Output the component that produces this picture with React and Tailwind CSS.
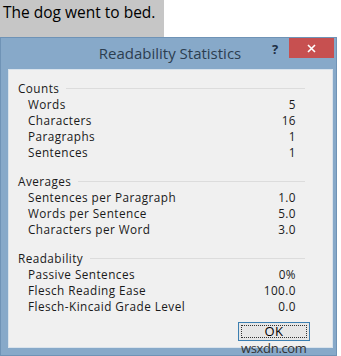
export default function App() {
  const sections = [
    {
      title: 'Counts',
      rows: [
        ['Words', '5'],
        ['Characters', '16'],
        ['Paragraphs', '1'],
        ['Sentences', '1'],
      ],
    },
    {
      title: 'Averages',
      rows: [
        ['Sentences per Paragraph', '1.0'],
        ['Words per Sentence', '5.0'],
        ['Characters per Word', '3.0'],
      ],
    },
    {
      title: 'Readability',
      rows: [
        ['Passive Sentences', '0%'],
        ['Flesch Reading Ease', '100.0'],
        ['Flesch-Kincaid Grade Level', '0.0'],
      ],
    },
  ];

  return (
    <div className="w-[341px] h-[356px] bg-white overflow-hidden relative" style={{ fontFamily: '"Open Sans", "Noto Sans", sans-serif' }}>
      <div className="h-[37px] w-[164px] bg-[#c6c6c6] pl-[3px] pt-[1px] text-[15.5px] leading-[22px] text-black">
        The dog went to bed.
      </div>

      <div className="w-[337px] h-[319px] bg-[#87a9c9] border border-[#6f93b6] flex flex-col">
        <div className="h-[31px] flex items-start relative">
          <div className="flex-1 text-center text-[15px] text-[#2c3e50] pt-[4px] pl-[3px]">Readability Statistics</div>
          <span className="absolute left-[271px] top-[2px] text-[13px] font-bold text-[#1e2f44]">?</span>
          <button className="absolute left-[288px] top-0 w-[45px] h-[20px] bg-[#c75050] flex items-center justify-center">
            <svg width="9" height="9" viewBox="0 0 9 9">
              <path d="M1 1 L8 8 M8 1 L1 8" stroke="#fff" strokeWidth="1.6" />
            </svg>
          </button>
        </div>

        <div className="ml-[7px] w-[325px] h-[279px] bg-[#f0f0f0] border border-[#d9e3ec] pt-[10px] text-[11.75px] tracking-[0.45px] text-[#1a1a1a]">
          {sections.map((s, i) => (
            <div key={s.title} className={i === 0 ? '' : 'mt-[13px]'}>
              <div className="flex items-center h-[16px] pl-[9px] pr-[27px]">
                <span className="leading-[16px]">{s.title}</span>
                <div className="flex-1 ml-[7px] h-px bg-[#dcdcdc]" />
              </div>
              {s.rows.map(([label, value]) => (
                <div key={label} className="flex justify-between h-[16px] leading-[16px] pl-[19px] pr-[36px]">
                  <span>{label}</span>
                  <span>{value}</span>
                </div>
              ))}
            </div>
          ))}

          <div className="flex justify-end pr-[22px] mt-[8px]">
            <button className="w-[72px] h-[19px] border border-[#3c7fb1] bg-[#e6e6e6] p-[2px]">
              <div className="h-full w-full border border-dotted border-[#333] flex items-center justify-center text-[13px] leading-none text-black">
                OK
              </div>
            </button>
          </div>
        </div>
      </div>

      <span className="absolute left-[241px] top-[341px] text-[13px] leading-[15px] text-[#333] tracking-tight">wsxdn.com</span>
    </div>
  );
}
